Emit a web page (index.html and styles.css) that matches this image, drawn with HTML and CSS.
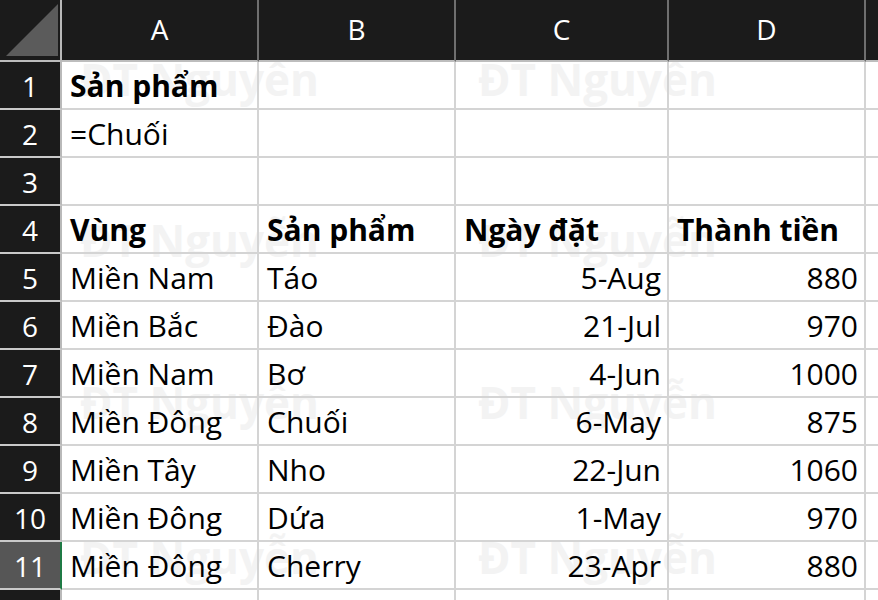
FILE: index.html
```html
<!DOCTYPE html>
<html lang="vi">
<head>
<meta charset="utf-8">
<title>Sheet</title>
<link rel="stylesheet" href="styles.css">
</head>
<body>
<div class="sheet">
  <div class="watermarks">
    <span class="wm" style="left:80px;top:55px">ĐT Nguyễn</span>
    <span class="wm" style="left:478px;top:55px">ĐT Nguyễn</span>
    <span class="wm" style="left:80px;top:216px">ĐT Nguyễn</span>
    <span class="wm" style="left:478px;top:216px">ĐT Nguyễn</span>
    <span class="wm" style="left:80px;top:378px">ĐT Nguyễn</span>
    <span class="wm" style="left:478px;top:378px">ĐT Nguyễn</span>
    <span class="wm" style="left:80px;top:533px">ĐT Nguyễn</span>
    <span class="wm" style="left:478px;top:533px">ĐT Nguyễn</span>
  </div>
  <div class="grid">
    <div class="corner"><span class="tri"></span></div>
    <div class="colhdr">A</div><div class="colhdr">B</div><div class="colhdr">C</div><div class="colhdr">D</div><div class="colhdr last"></div>

    <div class="rowhdr">1</div><div class="cell bold">Sản phẩm</div><div class="cell"></div><div class="cell"></div><div class="cell"></div><div class="cell"></div>
    <div class="rowhdr">2</div><div class="cell">=Chuối</div><div class="cell"></div><div class="cell"></div><div class="cell"></div><div class="cell"></div>
    <div class="rowhdr">3</div><div class="cell"></div><div class="cell"></div><div class="cell"></div><div class="cell"></div><div class="cell"></div>
    <div class="rowhdr">4</div><div class="cell bold">Vùng</div><div class="cell bold">Sản phẩm</div><div class="cell bold">Ngày đặt</div><div class="cell bold">Thành tiền</div><div class="cell"></div>
    <div class="rowhdr">5</div><div class="cell">Miền Nam</div><div class="cell">Táo</div><div class="cell num">5-Aug</div><div class="cell num">880</div><div class="cell"></div>
    <div class="rowhdr">6</div><div class="cell">Miền Bắc</div><div class="cell">Đào</div><div class="cell num">21-Jul</div><div class="cell num">970</div><div class="cell"></div>
    <div class="rowhdr">7</div><div class="cell">Miền Nam</div><div class="cell">Bơ</div><div class="cell num">4-Jun</div><div class="cell num">1000</div><div class="cell"></div>
    <div class="rowhdr">8</div><div class="cell">Miền Đông</div><div class="cell">Chuối</div><div class="cell num">6-May</div><div class="cell num">875</div><div class="cell"></div>
    <div class="rowhdr">9</div><div class="cell">Miền Tây</div><div class="cell">Nho</div><div class="cell num">22-Jun</div><div class="cell num">1060</div><div class="cell"></div>
    <div class="rowhdr">10</div><div class="cell">Miền Đông</div><div class="cell">Dứa</div><div class="cell num">1-May</div><div class="cell num">970</div><div class="cell"></div>
    <div class="rowhdr active">11</div><div class="cell">Miền Đông</div><div class="cell">Cherry</div><div class="cell num">23-Apr</div><div class="cell num">880</div><div class="cell"></div>
    <div class="rowhdr"></div><div class="cell"></div><div class="cell"></div><div class="cell"></div><div class="cell"></div><div class="cell"></div>
  </div>
</div>
</body>
</html>
```

FILE: styles.css
```css
* { box-sizing: border-box; }
html, body { margin: 0; padding: 0; background: #ffffff; }
body { width: 878px; height: 600px; overflow: hidden; font-family: "Open Sans", "Noto Sans", sans-serif; }

.sheet { position: relative; width: 878px; height: 600px; overflow: hidden; background: #ffffff; }

.watermarks { position: absolute; inset: 0; z-index: 0; pointer-events: none; }
.wm {
  position: absolute;
  font-family: "Open Sans", sans-serif;
  font-weight: 700;
  font-size: 44px;
  line-height: 48px;
  color: #f3f3f3;
  white-space: nowrap;
}

.grid {
  position: relative;
  display: grid;
  grid-template-columns: 62px 197px 197px 213px 197px 60px;
  grid-template-rows: 62px repeat(12, 48px);
  width: 926px;
}

.corner, .colhdr, .rowhdr {
  position: relative;
  z-index: 2;
  background: #1b1b1b;
  color: #ffffff;
  font-size: 28px;
  display: flex;
  align-items: center;
  justify-content: center;
}
.corner { border-right: 2px solid #b9b9b9; border-bottom: 2px solid #bdbdbd; }
.tri {
  position: absolute;
  left: 6px; top: 4px;
  width: 52px; height: 52px;
  background: #5b5b5b;
  clip-path: polygon(100% 0, 100% 100%, 0 100%);
}
.colhdr { border-right: 2px solid #6f6f6f; border-bottom: 2px solid #bdbdbd; padding-bottom: 2px; }
.rowhdr { border-right: 2px solid #b9b9b9; border-bottom: 2px solid #c9c9c9; padding-top: 1px; }
.rowhdr.active { background: #565656; border-right-color: #1f7a45; }

.cell {
  position: relative;
  z-index: 1;
  border-right: 2px solid #d4d4d4;
  border-bottom: 2px solid #d4d4d4;
  font-size: 30px;
  color: #000000;
  display: flex;
  align-items: flex-end;
  padding: 0 6px 3px 8px;
  white-space: nowrap;
  line-height: 38px;
}
.cell.bold { font-weight: 700; }
.cell.num { justify-content: flex-end; }
```
